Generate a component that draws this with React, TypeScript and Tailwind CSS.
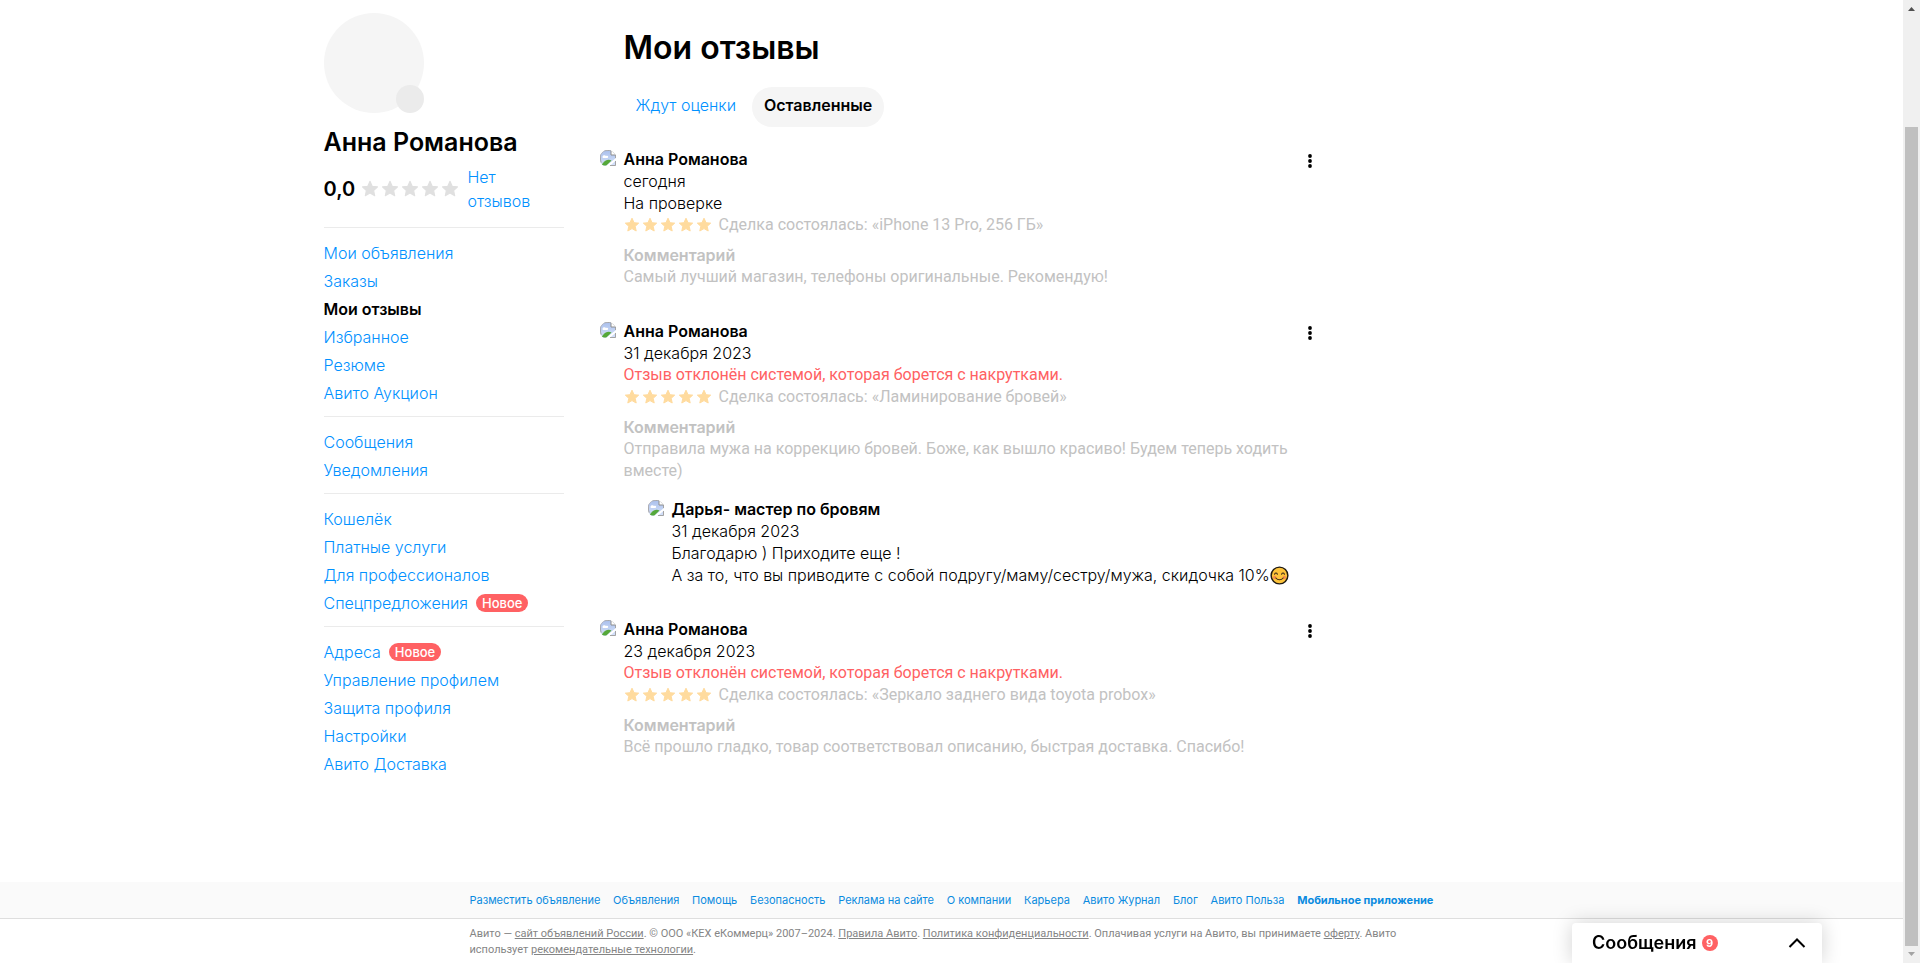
import { ReactNode } from 'react';

type NavItem = { label: string; active?: boolean; isNew?: boolean };

type Review = {
  author: string;
  date: string;
  status: string;
  rejected?: boolean;
  deal: string;
  comment: string;
  reply?: { author: string; date: string; lines: ReactNode[] };
};

const navGroups: NavItem[][] = [
  [
    { label: 'Мои объявления' },
    { label: 'Заказы' },
    { label: 'Мои отзывы', active: true },
    { label: 'Избранное' },
    { label: 'Резюме' },
    { label: 'Авито Аукцион' },
  ],
  [{ label: 'Сообщения' }, { label: 'Уведомления' }],
  [
    { label: 'Кошелёк' },
    { label: 'Платные услуги' },
    { label: 'Для профессионалов' },
    { label: 'Спецпредложения', isNew: true },
  ],
  [
    { label: 'Адреса', isNew: true },
    { label: 'Управление профилем' },
    { label: 'Защита профиля' },
    { label: 'Настройки' },
    { label: 'Авито Доставка' },
  ],
];

const footerLinks = [
  'Разместить объявление',
  'Объявления',
  'Помощь',
  'Безопасность',
  'Реклама на сайте',
  'О компании',
  'Карьера',
  'Авито Журнал',
  'Блог',
  'Авито Польза',
];

function SmileIcon() {
  return (
    <svg viewBox="0 0 20 20" className="inline-block size-[19px] align-[-4px]" role="img" aria-label="улыбка">
      <circle cx="10" cy="10" r="8.8" fill="#fdc33a" stroke="#1f1a12" strokeWidth="1.5" />
      <circle cx="4.9" cy="12" r="1.7" fill="#f58a4b" />
      <circle cx="15.1" cy="12" r="1.7" fill="#f58a4b" />
      <path d="M4.8 8.6c.7-1.5 2.3-1.5 3 0M12.2 8.6c.7-1.5 2.3-1.5 3 0M6.2 12.6c2 2.6 5.6 2.6 7.6 0" fill="none" stroke="#3b2a18" strokeWidth="1.1" strokeLinecap="round" />
    </svg>
  );
}

const reviews: Review[] = [
  {
    author: 'Анна Романова',
    date: 'сегодня',
    status: 'На проверке',
    deal: 'Сделка состоялась: «iPhone 13 Pro, 256 ГБ»',
    comment: 'Самый лучший магазин, телефоны оригинальные. Рекомендую!',
  },
  {
    author: 'Анна Романова',
    date: '31 декабря 2023',
    status: 'Отзыв отклонён системой, которая борется с накрутками.',
    rejected: true,
    deal: 'Сделка состоялась: «Ламинирование бровей»',
    comment: 'Отправила мужа на коррекцию бровей. Боже, как вышло красиво! Будем теперь ходить вместе)',
    reply: {
      author: 'Дарья- мастер по бровям',
      date: '31 декабря 2023',
      lines: [
        'Благодарю ) Приходите еще !',
        <>
          А за то, что вы приводите с собой подругу/маму/сестру/мужа, скидочка 10%
          <SmileIcon />
        </>,
      ],
    },
  },
  {
    author: 'Анна Романова',
    date: '23 декабря 2023',
    status: 'Отзыв отклонён системой, которая борется с накрутками.',
    rejected: true,
    deal: 'Сделка состоялась: «Зеркало заднего вида toyota probox»',
    comment: 'Всё прошло гладко, товар соответствовал описанию, быстрая доставка. Спасибо!',
  },
];

function Star({ className }: { className: string }) {
  return (
    <svg viewBox="0 0 16 16" className={className} fill="currentColor" aria-hidden="true">
      <path
        d="M8 1.200L10.060 5.700L14.700 6.150L11.200 9.300L12.200 14L8 11.600L3.800 14L4.800 9.300L1.300 6.150L5.940 5.700Z"
        stroke="currentColor"
        strokeLinejoin="round"
      />
    </svg>
  );
}

function BrokenImage() {
  return (
    <svg viewBox="0 0 16 16" className="mt-[2px] size-4 shrink-0" aria-hidden="true">
      <defs>
        <clipPath id="avatar-clip">
          <path d="M8 0a8 8 0 0 1 5.600 2.300L16 5v11H4a8 8 0 0 1-4-7V8a8 8 0 0 1 8-8z" />
        </clipPath>
        <linearGradient id="avatar-sky" x1="0" y1="0" x2="0" y2="1">
          <stop offset="0" stopColor="#a9bfec" />
          <stop offset="1" stopColor="#d7e3fa" />
        </linearGradient>
      </defs>
      <g clipPath="url(#avatar-clip)">
        <path d="M0 0h11v5h5v11H0z" fill="url(#avatar-sky)" />
        <path d="M2.500 7c0-2 2.500-2.500 3.500-1 2-1 3 1 1.500 2H3.500C2.800 8 2.500 7.500 2.500 7z" fill="#fff" />
        <path d="M1 15.500l2-2.500c2.500-3 5.500-4 8.500-2.500L6.500 15.500z" fill="#55a83a" />
        <path d="M16 8v2.500L9.500 16H6z" fill="#fff" />
        <path d="M.5 16V.5H11l4.500 4.500v3M15.500 11v4.500H10" fill="none" stroke="#a4a4a4" />
        <path d="M11 .5V5h4.500" fill="#fff" stroke="#8e8e8e" />
      </g>
      <path d="M8 .5A7.500 7.500 0 0 0 2 13" fill="none" stroke="#b0b0b8" strokeWidth=".8" />
    </svg>
  );
}

function Sidebar() {
  return (
    <aside className="w-60 shrink-0 pt-[13px]">
      <div className="relative size-[100px] rounded-full bg-[#f5f5f5]">
        <span className="absolute right-0 bottom-0 size-7 rounded-full bg-[#ebebeb]" />
      </div>
      <h2 className="mt-[13px] text-[25px] leading-8 font-semibold">Анна Романова</h2>
      <div className="mt-[7px] mb-[14px] flex items-center">
        <span className="w-[37px] text-[20px] leading-7 font-semibold">0,0</span>
        <span className="flex gap-[2px] text-[#e0e0e0]">
          {[0, 1, 2, 3, 4].map((n) => (
            <Star key={n} className="size-[18px]" />
          ))}
        </span>
        <a href="#reviews" className="ml-[9px] w-20 text-[16px] leading-6 font-light text-[#0191ff]">Нет отзывов</a>
      </div>
      <nav>
        {navGroups.map((group, i) => (
          <ul key={i} className="mb-[9px] border-t border-[#ebebeb] pt-[11px]">
            {group.map((item) => (
              <li key={item.label} className="flex h-7 items-center gap-2">
                <a
                  href="#nav"
                  className={item.active ? 'text-[16px] leading-5 font-semibold' : 'text-[16px] leading-5 font-light text-[#0191ff]'}
                >
                  {item.label}
                </a>
                {item.isNew && (
                  <span className="rounded-full bg-[#ff6163] px-[6px] text-[13px] leading-[18px] font-medium text-white">Новое</span>
                )}
              </li>
            ))}
          </ul>
        ))}
      </nav>
    </aside>
  );
}

function ReviewItem({ review }: { review: Review }) {
  return (
    <article className="flex gap-2">
      <BrokenImage />
      <div className="min-w-0 flex-1">
        <h3 className="font-semibold">{review.author}</h3>
        <p className="font-light">{review.date}</p>
        <p className={review.rejected ? "font-['Roboto',sans-serif] text-[#ff6163]" : 'font-light'}>{review.status}</p>
        <div className="flex items-center gap-[7px]">
          <span className="flex gap-[2px] text-[#ffdb9e]">
            {[0, 1, 2, 3, 4].map((n) => (
              <Star key={n} className="size-4" />
            ))}
          </span>
          <span className="font-['Roboto',sans-serif] text-[#c2c2c2]">{review.deal}</span>
        </div>
        <div className="mt-2 text-[#c2c2c2]">
          <h4 className="font-semibold">Комментарий</h4>
          <p className="font-['Roboto',sans-serif]">{review.comment}</p>
        </div>
        {review.reply && (
          <div className="mt-4 ml-6 flex gap-2">
            <BrokenImage />
            <div className="font-light whitespace-nowrap">
              <h3 className="font-semibold">{review.reply.author}</h3>
              <p>{review.reply.date}</p>
              {review.reply.lines.map((line, i) => (
                <p key={i} className="h-[22px]">{line}</p>
              ))}
            </div>
          </div>
        )}
      </div>
      <button type="button" aria-label="Действия" className="mt-[3px] flex size-5 shrink-0 items-center justify-center">
        <svg viewBox="0 0 4 14" className="h-[14px] w-1" aria-hidden="true">
          <circle cx="2" cy="2" r="1.9" />
          <circle cx="2" cy="7" r="1.9" />
          <circle cx="2" cy="12" r="1.9" />
        </svg>
      </button>
    </article>
  );
}

function Footer() {
  return (
    <footer className="text-[11px]">
      <div className="border-b border-[#dedede] bg-[#fafafa]">
        <nav className="mx-auto flex h-9 max-w-[964px] items-center justify-between text-[#0a8be0]">
          {footerLinks.map((link) => (
            <a key={link} href="#footer">{link}</a>
          ))}
          <a href="#app" className="font-bold">Мобильное приложение</a>
        </nav>
      </div>
      <p className="mx-auto h-11 max-w-[964px] pt-[7px] font-['Roboto',sans-serif] leading-4 text-[#858585]">
        Авито — <a href="#site" className="underline">сайт объявлений России</a>. © ООО «КЕХ еКоммерц» 2007–2024.{' '}
        <a href="#rules" className="underline">Правила Авито</a>.{' '}
        <a href="#privacy" className="underline">Политика конфиденциальности</a>. Оплачивая услуги на Авито, вы принимаете{' '}
        <a href="#offer" className="underline">оферту</a>. Авито
        <br />
        использует <a href="#tech" className="underline">рекомендательные технологии</a>.
      </p>
    </footer>
  );
}

export default function App() {
  return (
    <div className="flex h-screen overflow-hidden bg-white font-['Inter',sans-serif] text-black">
      <div className="flex min-w-0 flex-1 flex-col">
        <div className="mx-auto flex w-full max-w-[1256px] flex-1 gap-9">
          <Sidebar />
          <main className="w-full max-w-[720px] pt-7 text-[16px] leading-[22px]">
            <h1 className="ml-6 text-[32px] leading-10 font-semibold">Мои отзывы</h1>
            <div className="mt-[19px] mb-[21px] ml-6 flex gap-1">
              <button type="button" className="h-10 rounded-full px-3 pb-1 font-light text-[#0191ff]">Ждут оценки</button>
              <button type="button" className="h-10 rounded-full bg-[#f5f5f5] px-3 pb-1 font-semibold">Оставленные</button>
            </div>
            <div className="flex flex-col gap-8">
              {reviews.map((review, i) => (
                <ReviewItem key={i} review={review} />
              ))}
            </div>
          </main>
        </div>
        <Footer />
      </div>

      <div className="flex w-[17px] shrink-0 flex-col items-center justify-between bg-[#f0f0f0]" aria-hidden="true">
        <svg viewBox="0 0 17 17" className="size-[17px]"><path d="M5 11h7L8.500 7z" fill="#505050" /></svg>
        <div className="mt-[110px] w-[13px] flex-1 bg-[#c0c0c0]" />
        <svg viewBox="0 0 17 17" className="size-[17px]"><path d="M5 6h7l-3.500 4z" fill="#a3a3a3" /></svg>
      </div>

      <button
        type="button"
        className="fixed right-[98px] bottom-0 flex h-10 w-[250px] items-center rounded-t-[4px] bg-white pr-4 pl-5 shadow-[0_0_20px_rgba(0,0,0,0.18)]"
      >
        <span className="text-[18px] leading-6 font-semibold">Сообщения</span>
        <span className="ml-[5px] size-4 rounded-full bg-[#ff6163] text-center text-[11px] leading-4 font-bold text-white">9</span>
        <svg viewBox="0 0 18 12" className="ml-auto h-3 w-[18px]" fill="none" stroke="#000" strokeWidth="2" aria-hidden="true">
          <path d="M1.500 10L9 2.500l7.500 7.500" />
        </svg>
      </button>
    </div>
  );
}
